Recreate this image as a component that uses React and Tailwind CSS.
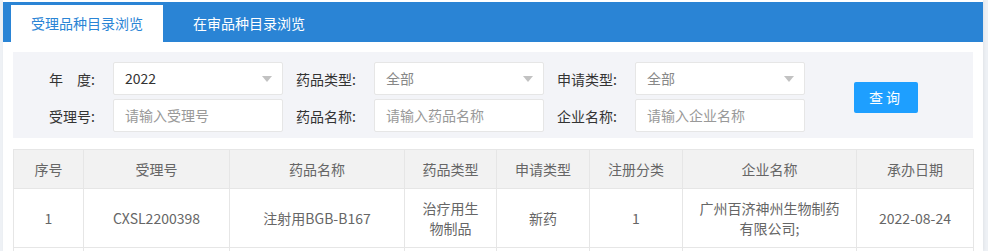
const font = { fontFamily: '"Noto Sans CJK SC", "Noto Sans", sans-serif' };

function Caret() {
  return (
    <span className="absolute right-[10px] top-1/2 -translate-y-1/2 h-0 w-0 border-x-[5px] border-t-[6px] border-x-transparent border-t-[#c2c2c2]" />
  );
}

function Field({ label, labelWidth, value, placeholder, select, muted }) {
  return (
    <div className="flex items-center">
      <div
        className="text-right text-[14px] text-[#333] leading-5 whitespace-pre"
        style={{ width: labelWidth }}
      >
        {label}
      </div>
      <div className="relative ml-[18px] flex h-[33px] w-[170px] items-center rounded-[2px] border border-[#e6e6e6] bg-white pl-[11px] text-[14px]">
        {value ? (
          <span className={muted ? "text-[#888]" : "text-[#333]"}>{value}</span>
        ) : (
          <span className="text-[#999]">{placeholder}</span>
        )}
        {select && <Caret />}
      </div>
    </div>
  );
}

const columns = [
  { title: "序号", w: "w-[70px]" },
  { title: "受理号", w: "w-[146px]" },
  { title: "药品名称", w: "w-[175px]" },
  { title: "药品类型", w: "w-[92px]" },
  { title: "申请类型", w: "w-[93px]" },
  { title: "注册分类", w: "w-[93px]" },
  { title: "企业名称", w: "w-[174px]" },
  { title: "承办日期", w: "w-[117px]" },
];

const rows = [
  ["1", "CXSL2200398", "注射用BGB-B167", "治疗用生物制品", "新药", "1", "广州百济神州生物制药有限公司;", "2022-08-24"],
];

export default function App() {
  return (
    <div className="w-[988px] h-[251px] overflow-hidden bg-[#eef1f5] pl-[3px]" style={font}>
      <div className="w-[980px] h-full bg-white pt-[2px] shadow-[1px_0_3px_rgba(0,0,0,0.06)]">
        <div className="flex h-[40px] items-end gap-[10px] bg-[#2a84d5] pl-[8px]">
          <div className="flex h-[37px] items-center bg-white px-[20px] text-[14px] text-[#2a84d5]">
            受理品种目录浏览
          </div>
          <div className="flex h-[37px] items-center px-[20px] text-[14px] text-white">
            在审品种目录浏览
          </div>
        </div>

        <div className="mx-[10px] mt-[10px] flex items-center bg-[#f3f4f8] pt-[10px] pb-[6px]">
          <div className="flex flex-col gap-[4px]">
            <div className="flex">
              <Field label="年　度:" labelWidth={82} value="2022" select />
              <Field label="药品类型:" labelWidth={73} value="全部" select muted />
              <Field label="申请类型:" labelWidth={73} value="全部" select muted />
            </div>
            <div className="flex">
              <Field label="受理号:" labelWidth={82} placeholder="请输入受理号" />
              <Field label="药品名称:" labelWidth={73} placeholder="请输入药品名称" />
              <Field label="企业名称:" labelWidth={73} placeholder="请输入企业名称" />
            </div>
          </div>
          <button className="ml-[49px] mt-[1px] h-[31px] w-[64px] rounded-[2px] bg-[#1e9fff] text-[14px] tracking-[3px] text-white">
            查询
          </button>
        </div>

        <table className="mx-[10px] mt-[11px] w-[960px] table-fixed border-collapse text-[14px] text-[#666]">
          <thead>
            <tr className="bg-[#f2f2f2]">
              {columns.map((c) => (
                <th key={c.title} className={`${c.w} border border-[#e6e6e6] px-[15px] py-[9px] text-center font-normal leading-5`}>
                  {c.title}
                </th>
              ))}
            </tr>
          </thead>
          <tbody>
            {rows.map((r, i) => (
              <tr key={i}>
                {r.map((cell, j) => (
                  <td key={j} className="border border-[#e6e6e6] px-[15px] py-[9px] text-center leading-5 break-all">
                    {cell}
                  </td>
                ))}
              </tr>
            ))}
            <tr>
              {columns.map((c) => (
                <td key={c.title} className="h-[40px] border border-[#e6e6e6]" />
              ))}
            </tr>
          </tbody>
        </table>
      </div>
    </div>
  );
}
